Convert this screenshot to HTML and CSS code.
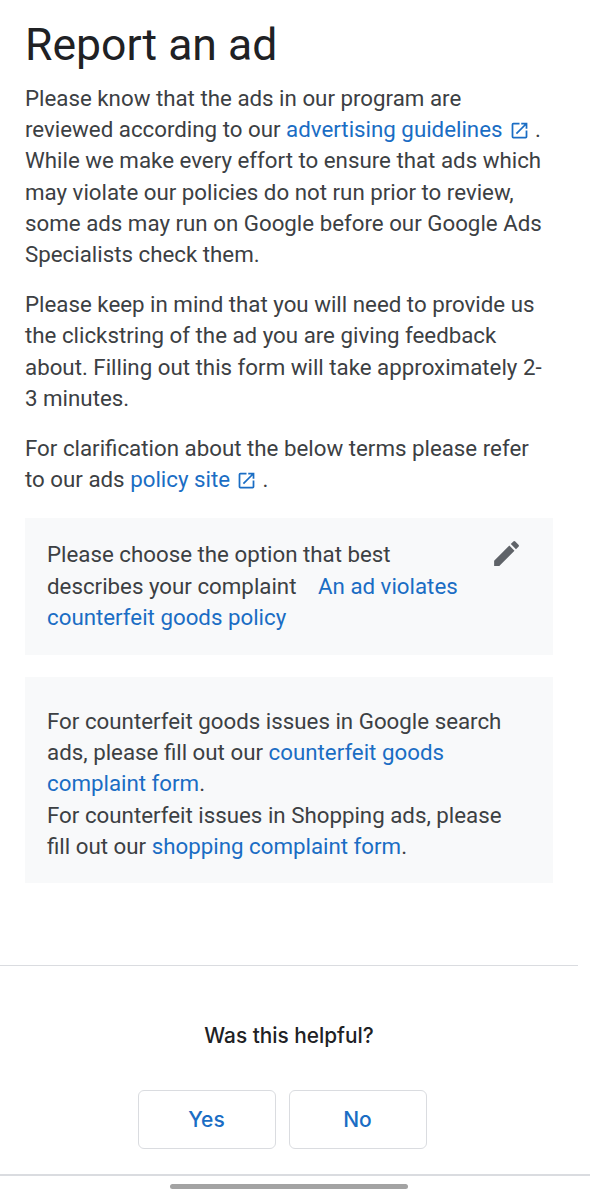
FILE: index.html
```html
<!DOCTYPE html>
<html lang="en">
<head>
  <meta charset="UTF-8" />
  <title>Report an ad</title>
  <link rel="stylesheet" href="styles.css">
</head>
<body>

  <div class="article">
    <h1>Report an ad</h1>
    <p>Please know that the ads in our program are reviewed according to our <a href="#">advertising guidelines<svg class="ext" viewBox="0 0 24 24" aria-hidden="true"><path d="M19 19H5V5h7V3H5a2 2 0 0 0-2 2v14a2 2 0 0 0 2 2h14a2 2 0 0 0 2-2v-7h-2v7zM14 3v2h3.59l-9.83 9.83 1.41 1.41L19 6.41V10h2V3h-7z"/></svg></a> . While we make every effort to ensure that ads which may violate our policies do not run prior to review, some ads may run on Google before our Google Ads Specialists check them.</p>
    <p>Please keep in mind that you will need to provide us the clickstring of the ad you are giving feedback about. Filling out this form will take approximately 2-3 minutes.</p>
    <p>For clarification about the below terms please refer to our ads <a href="#">policy site<svg class="ext" viewBox="0 0 24 24" aria-hidden="true"><path d="M19 19H5V5h7V3H5a2 2 0 0 0-2 2v14a2 2 0 0 0 2 2h14a2 2 0 0 0 2-2v-7h-2v7zM14 3v2h3.59l-9.83 9.83 1.41 1.41L19 6.41V10h2V3h-7z"/></svg></a> .</p>

    <div class="box box-choice">
      <div class="choice-text">Please choose the option that best describes your complaint <a class="choice-value" href="#">An ad violates counterfeit goods policy</a></div>
      <svg class="edit" viewBox="0 0 24 24" aria-hidden="true"><path d="M3 17.25V21h3.75L17.81 9.94l-3.75-3.75L3 17.25zM20.71 7.04a1 1 0 0 0 0-1.41l-2.34-2.34a1 1 0 0 0-1.41 0l-1.83 1.83 3.75 3.75 1.83-1.83z"/></svg>
    </div>

    <div class="box box-info">
      For counterfeit goods issues in Google search ads, please fill out our <a href="#">counterfeit goods complaint form</a>.<br>
      For counterfeit issues in Shopping ads, please fill out our <a href="#">shopping complaint form</a>.
    </div>
  </div>

  <div class="feedback">
    <div class="feedback-title">Was this helpful?</div>
    <div class="feedback-btns">
      <button>Yes</button>
      <button>No</button>
    </div>
  </div>

  <div class="nav-bar">
    <div class="nav-pill"></div>
  </div>

</body>
</html>
```

FILE: styles.css
```css
body {
  font-family: Roboto, "Liberation Sans", sans-serif;
  margin: 0;
  background: #fff;
  color: #3c4043;
  font-size: 22.3px;
  line-height: 31.2px;
}

a {
  color: #1a6dc4;
  text-decoration: none;
}

.article {
  padding: 19px 37px 0 25px;
}

h1 {
  margin: 0 0 12px;
  color: #202124;
  font-size: 44.5px;
  font-weight: 400;
  line-height: 52px;
}

p {
  margin: 0 5px 19px 0;
}

.ext {
  width: 21px;
  height: 21px;
  margin: 0 0 0 6px;
  vertical-align: -4px;
  fill: #1a6dc4;
}

.box {
  background: #f8f9fa;
  margin-bottom: 22px;
}

.box-choice {
  display: flex;
  align-items: flex-start;
  margin-top: 23px;
  padding: 21px 30px 22px 22px;
}

.choice-text {
  flex: 1;
  margin-right: 30px;
}

.choice-value {
  margin-left: 16px;
}

.edit {
  width: 33px;
  height: 33px;
  margin-top: -2px;
  fill: #5f6368;
}

.box-info {
  padding: 29px 38px 21px 22px;
}

/* Spodná časť */
.feedback {
  margin: 82px 12px 0 0;
  border-top: 1px solid #dadce0;
  padding-top: 54px;
  text-align: center;
}

.feedback-title {
  color: #202124;
  font-family: Inter, Roboto, sans-serif;
  font-size: 20.8px;
  line-height: 32px;
  font-weight: 500;
}

.feedback-btns {
  display: flex;
  justify-content: center;
  gap: 13px;
  margin-top: 38px;
  padding-right: 14px;
}

.feedback-btns button {
  width: 138px;
  height: 59px;
  background: #fff;
  border: 1px solid #dadce0;
  border-radius: 6px;
  color: #1a6dc4;
  font-family: Inter, Roboto, sans-serif;
  font-size: 21px;
  font-weight: 500;
}

.nav-bar {
  margin-top: 25px;
  border-top: 2px solid #dadce0;
  height: 24px;
  display: flex;
  justify-content: center;
  padding-top: 8px;
  box-sizing: border-box;
}

.nav-pill {
  width: 238px;
  height: 5px;
  margin-right: 12px;
  background: #a3a3a3;
  border-radius: 3px;
}
```
